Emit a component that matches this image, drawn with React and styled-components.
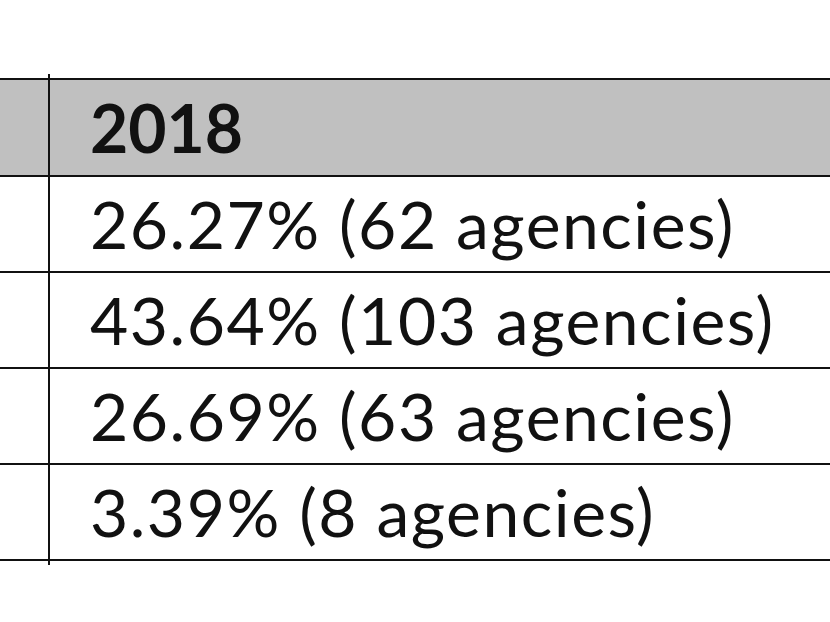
import React from "react";
import styled, { createGlobalStyle } from "styled-components";

const Global = createGlobalStyle`
  html, body { margin: 0; padding: 0; background: #ffffff; overflow: hidden; }
  body { font-family: "Lato", "Open Sans", sans-serif; }
`;

const Page = styled.div`
  width: 830px;
  height: 622px;
  padding-top: 78px;
  box-sizing: border-box;
  overflow: hidden;
`;

const Frame = styled.div`
  position: relative;
  width: 1000px;

  &::after {
    content: "";
    position: absolute;
    left: 48px;
    top: -4px;
    bottom: -4px;
    width: 2px;
    background: #111;
  }
`;

const Table = styled.table`
  border-collapse: collapse;
  width: 1000px;
  table-layout: fixed;
`;

const Row = styled.tr`
  height: ${(p) => p.$h}px;
`;

const Cell = styled.td`
  border: 2px solid #111;
  border-left: none;
  background: ${(p) => (p.$head ? "#c0c0c0" : "#ffffff")};
  width: ${(p) => (p.$side ? "48px" : "auto")};
  padding: ${(p) => (p.$side ? "0" : "0 0 0 40px")};
  font-size: 66px;
  font-weight: ${(p) => (p.$head ? 700 : 400)};
  letter-spacing: ${(p) => (p.$head ? "0" : "1.5px")};
  color: #111;
  line-height: 1;
  white-space: nowrap;
  vertical-align: middle;
`;

const rows = [
  "26.27% (62 agencies)",
  "43.64% (103 agencies)",
  "26.69% (63 agencies)",
  "3.39% (8 agencies)",
];

export default function App() {
  return (
    <Page>
      <Global />
      <Frame>
        <Table>
          <tbody>
            <Row $h={97}>
              <Cell $side $head />
              <Cell $head>2018</Cell>
            </Row>
            {rows.map((r) => (
              <Row key={r} $h={96}>
                <Cell $side />
                <Cell>{r}</Cell>
              </Row>
            ))}
          </tbody>
        </Table>
      </Frame>
    </Page>
  );
}
